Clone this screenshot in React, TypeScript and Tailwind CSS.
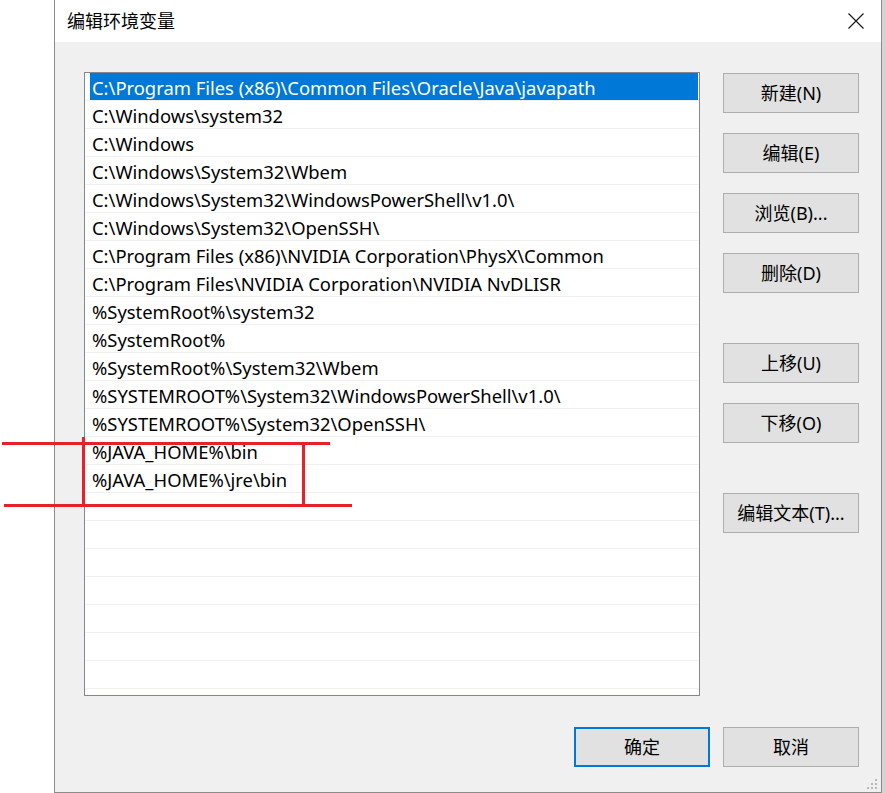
import React from "react";

const paths = [
  "C:\\Program Files (x86)\\Common Files\\Oracle\\Java\\javapath",
  "C:\\Windows\\system32",
  "C:\\Windows",
  "C:\\Windows\\System32\\Wbem",
  "C:\\Windows\\System32\\WindowsPowerShell\\v1.0\\",
  "C:\\Windows\\System32\\OpenSSH\\",
  "C:\\Program Files (x86)\\NVIDIA Corporation\\PhysX\\Common",
  "C:\\Program Files\\NVIDIA Corporation\\NVIDIA NvDLISR",
  "%SystemRoot%\\system32",
  "%SystemRoot%",
  "%SystemRoot%\\System32\\Wbem",
  "%SYSTEMROOT%\\System32\\WindowsPowerShell\\v1.0\\",
  "%SYSTEMROOT%\\System32\\OpenSSH\\",
  "%JAVA_HOME%\\bin",
  "%JAVA_HOME%\\jre\\bin",
];

const font = { fontFamily: '"Noto Sans", "Noto Sans CJK SC", sans-serif' };

function WinButton({ label, primary }: { label: string; primary?: boolean }) {
  return (
    <button
      className={`w-[136px] h-[40px] bg-[#e1e1e1] text-[18px] text-black flex items-center justify-center ${
        primary ? "border-2 border-[#0078d7]" : "border border-[#adadad]"
      }`}
    >
      {label}
    </button>
  );
}

export default function App() {
  const rows = Array.from({ length: 22 }, (_, i) => paths[i] ?? "");

  return (
    <div className="relative w-[885px] h-[793px] bg-white overflow-hidden flex" style={font}>
      {/* background window peeking out */}
      <div className="w-[54px] h-full bg-white" />

      {/* dialog */}
      <div className="w-[828px] h-[793px] flex flex-col border-l border-r border-b border-[#8c8c8c]">
        <div className="h-[42px] bg-white flex items-center justify-between pl-[12px] pr-[16px]">
          <span className="text-[18px] text-black">编辑环境变量</span>
          <svg width="16" height="16" viewBox="0 0 16 16" className="mr-[1px]">
            <path d="M0.5 0.5L15.5 15.5M15.5 0.5L0.5 15.5" stroke="#111" strokeWidth="1.1" />
          </svg>
        </div>

        <div className="relative flex-1 bg-[#f0f0f0] flex flex-col pl-[29px] pt-[30px]">
          <div className="flex">
            {/* list */}
            <div className="w-[616px] h-[624px] bg-white border border-[#828790] overflow-hidden">
              {rows.map((p, i) => (
                <div key={i} className="h-[28px] border-b border-[#f0f0f0] flex">
                  <div
                    className={`flex-1 ml-[5px] mr-[1px] flex items-center pl-[2px] pt-[3px] text-[18.4px] ${
                      i === 0 ? "bg-[#0078d7] text-white" : "text-black"
                    }`}
                  >
                    {p}
                  </div>
                </div>
              ))}
            </div>

            {/* side buttons */}
            <div className="ml-[23px] pt-[1px] flex flex-col">
              <WinButton label="新建(N)" />
              <div className="mt-[20px]">
                <WinButton label="编辑(E)" />
              </div>
              <div className="mt-[20px]">
                <WinButton label="浏览(B)..." />
              </div>
              <div className="mt-[20px]">
                <WinButton label="删除(D)" />
              </div>
              <div className="mt-[50px]">
                <WinButton label="上移(U)" />
              </div>
              <div className="mt-[20px]">
                <WinButton label="下移(O)" />
              </div>
              <div className="mt-[50px]">
                <WinButton label="编辑文本(T)..." />
              </div>
            </div>
          </div>

          {/* bottom buttons */}
          <div className="mt-[31px] pl-[490px] flex gap-[13px]">
            <WinButton label="确定" primary />
            <WinButton label="取消" />
          </div>

          {/* resize grip */}
          <svg width="12" height="12" viewBox="0 0 12 12" className="absolute right-[2px] bottom-[1px]">
            <rect x="8" y="0" width="2" height="2" fill="#b8b8b8" />
            <rect x="4" y="4" width="2" height="2" fill="#b8b8b8" />
            <rect x="8" y="4" width="2" height="2" fill="#b8b8b8" />
            <rect x="0" y="8" width="2" height="2" fill="#b8b8b8" />
            <rect x="4" y="8" width="2" height="2" fill="#b8b8b8" />
            <rect x="8" y="8" width="2" height="2" fill="#b8b8b8" />
          </svg>
        </div>
      </div>

      <div className="w-[3px] h-full bg-[#d4d4d4]" />

      {/* red annotation drawn on the screenshot */}
      <div className="absolute left-[2px] top-[442px] w-[328px] h-[3px] bg-[#e8202a]" />
      <div className="absolute left-[4px] top-[504px] w-[348px] h-[3px] bg-[#e8202a]" />
      <div className="absolute left-[82px] top-[437px] w-[3px] h-[69px] bg-[#e8202a]" />
      <div className="absolute left-[302px] top-[442px] w-[3px] h-[63px] bg-[#e8202a]" />
    </div>
  );
}
